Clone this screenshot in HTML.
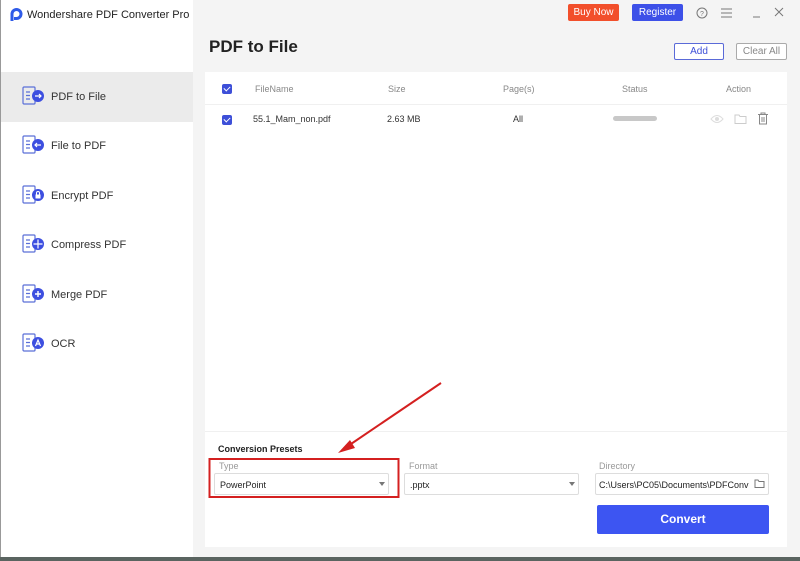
<!DOCTYPE html>
<html><head><meta charset="utf-8"><style>
*{margin:0;padding:0;box-sizing:border-box}
body{width:800px;height:561px;overflow:hidden;background:#f4f4f4;font-family:"Liberation Sans",sans-serif;position:relative;color:#333}
.abs{position:absolute}
.side{left:0;top:0;width:193px;height:558px;background:#fff;border-left:1px solid #999}
.item{position:absolute;left:0;width:192px;height:50px;font-size:11px;color:#333}
.item span{position:absolute;left:50px;top:19px}
.item svg{position:absolute;left:21px;top:14px}
.btn{position:absolute;font-size:10px;text-align:center;border-radius:2px;white-space:nowrap}
.th{position:absolute;top:84px;font-size:9px;color:#888}
.td{position:absolute;top:114px;font-size:9px;color:#333}
.cb{position:absolute;width:10px;height:10px;background:#3d4fd8;border-radius:2px}
.cb:after{content:"";position:absolute;left:3px;top:1px;width:3px;height:5px;border:solid #fff;border-width:0 1.5px 1.5px 0;transform:rotate(45deg)}
.sel{position:absolute;height:22px;border:1px solid #ddd;border-radius:2px;background:#fff;font-size:9px;padding:6px 5px;color:#222;white-space:nowrap;overflow:hidden}
.lbl{position:absolute;font-size:9px;color:#999}
</style></head><body>
<div class="abs side">
  <svg class="abs" style="left:9px;top:8px" width="13" height="14" viewBox="0 0 13 14"><path d="M2 13V6a4.5 4.5 0 1 1 4.5 4.5H4" fill="none" stroke="#2f5be8" stroke-width="3"/></svg>
  <div class="abs" style="left:26px;top:9px;font-size:11px;color:#222;white-space:nowrap">Wondershare PDF Converter Pro</div>
  <div class="item" style="top:72px;background:#ebebeb"><svg width="24" height="20" viewBox="0 0 24 20"><rect x="1" y="1" width="12" height="17" rx="1" fill="none" stroke="#5a6fd8" stroke-width="1.2"/><path d="M4 6h4M4 9.5h4M4 13h4" stroke="#5a6fd8" stroke-width="1.2"/><circle cx="16" cy="10" r="6" fill="#3d4fe0"/><path d="M13 10h6M17 8l2 2-2 2" stroke="#fff" stroke-width="1.2" fill="none"/></svg><span>PDF to File</span></div>
  <div class="item" style="top:121px"><svg width="24" height="20" viewBox="0 0 24 20"><rect x="1" y="1" width="12" height="17" rx="1" fill="none" stroke="#5a6fd8" stroke-width="1.2"/><path d="M4 6h4M4 9.5h4M4 13h4" stroke="#5a6fd8" stroke-width="1.2"/><circle cx="16" cy="10" r="6" fill="#3d4fe0"/><path d="M13 10h6M15 8l-2 2 2 2" stroke="#fff" stroke-width="1.2" fill="none"/></svg><span>File to PDF</span></div>
  <div class="item" style="top:171px"><svg width="24" height="20" viewBox="0 0 24 20"><rect x="1" y="1" width="12" height="17" rx="1" fill="none" stroke="#5a6fd8" stroke-width="1.2"/><path d="M4 6h4M4 9.5h4M4 13h4" stroke="#5a6fd8" stroke-width="1.2"/><circle cx="16" cy="10" r="6" fill="#3d4fe0"/><rect x="13.5" y="9.5" width="5" height="4" fill="#fff"/><path d="M14.5 9.5v-1.5a1.5 1.5 0 0 1 3 0v1.5" stroke="#fff" fill="none"/></svg><span>Encrypt PDF</span></div>
  <div class="item" style="top:220px"><svg width="24" height="20" viewBox="0 0 24 20"><rect x="1" y="1" width="12" height="17" rx="1" fill="none" stroke="#5a6fd8" stroke-width="1.2"/><path d="M4 6h4M4 9.5h4M4 13h4" stroke="#5a6fd8" stroke-width="1.2"/><circle cx="16" cy="10" r="6" fill="#3d4fe0"/><path d="M16 5.5v9M11.5 10h9" stroke="#fff" stroke-width="1.2"/></svg><span>Compress PDF</span></div>
  <div class="item" style="top:270px"><svg width="24" height="20" viewBox="0 0 24 20"><rect x="1" y="1" width="12" height="17" rx="1" fill="none" stroke="#5a6fd8" stroke-width="1.2"/><path d="M4 6h4M4 9.5h4M4 13h4" stroke="#5a6fd8" stroke-width="1.2"/><circle cx="16" cy="10" r="6" fill="#3d4fe0"/><path d="M16 7v6M13 10h6" stroke="#fff" stroke-width="1.4"/></svg><span>Merge PDF</span></div>
  <div class="item" style="top:319px"><svg width="24" height="20" viewBox="0 0 24 20"><rect x="1" y="1" width="12" height="17" rx="1" fill="none" stroke="#5a6fd8" stroke-width="1.2"/><path d="M4 6h4M4 9.5h4M4 13h4" stroke="#5a6fd8" stroke-width="1.2"/><circle cx="16" cy="10" r="6" fill="#3d4fe0"/><path d="M13.5 13l2.5-6 2.5 6M14.5 11h3" stroke="#fff" stroke-width="1.2" fill="none"/></svg><span>OCR</span></div>
</div>
<div class="btn" style="left:568px;top:4px;width:51px;height:17px;background:#f24f2b;color:#fff;line-height:17px">Buy Now</div>
<div class="btn" style="left:632px;top:4px;width:51px;height:17px;background:#3d50e8;color:#fff;line-height:17px">Register</div>
<svg class="abs" style="left:696px;top:7px" width="12" height="12"><circle cx="6" cy="6" r="5" fill="none" stroke="#777"/><text x="6" y="9" font-size="7" text-anchor="middle" fill="#777" font-family="Liberation Sans">?</text></svg>
<svg class="abs" style="left:721px;top:8px" width="11" height="10"><path d="M0 1h11M0 5h11M0 9h11" stroke="#777"/></svg>
<svg class="abs" style="left:752px;top:8px" width="10" height="10"><path d="M1 9h7" stroke="#777"/></svg>
<svg class="abs" style="left:774px;top:7px" width="10" height="10"><path d="M1 1l8 8M9 1l-8 8" stroke="#777"/></svg>
<div class="abs" style="left:209px;top:37px;font-size:17px;font-weight:bold;color:#222">PDF to File</div>
<div class="btn" style="left:674px;top:43px;width:50px;height:17px;border:1px solid #5a6ad8;color:#3d4fd8;line-height:15px;background:#fff">Add</div>
<div class="btn" style="left:736px;top:43px;width:51px;height:17px;border:1px solid #aaa;color:#888;line-height:15px;background:#fff">Clear All</div>
<div class="abs" style="left:205px;top:72px;width:582px;height:475px;background:#fff"></div>
<div class="abs" style="left:205px;top:104px;width:582px;height:1px;background:#f0f0f0"></div>
<div class="abs" style="left:205px;top:431px;width:582px;height:1px;background:#f0f0f0"></div>
<div class="cb" style="left:222px;top:84px"></div>
<div class="th" style="left:255px">FileName</div><div class="th" style="left:388px">Size</div><div class="th" style="left:503px">Page(s)</div><div class="th" style="left:622px">Status</div><div class="th" style="left:726px">Action</div>
<div class="cb" style="left:222px;top:115px"></div>
<div class="td" style="left:253px">55.1_Mam_non.pdf</div><div class="td" style="left:387px">2.63 MB</div><div class="td" style="left:513px">All</div>
<div class="abs" style="left:613px;top:116px;width:44px;height:5px;border-radius:3px;background:#c8c8c8"></div>
<svg class="abs" style="left:710px;top:114px" width="14" height="10"><path d="M1 5Q7-2 13 5Q7 12 1 5Z" fill="none" stroke="#ddd"/><circle cx="7" cy="5" r="2" fill="#ddd"/></svg>
<svg class="abs" style="left:734px;top:113px" width="13" height="11"><path d="M1 2h4l1 1.5h6v7H1Z" fill="none" stroke="#ccc"/></svg>
<svg class="abs" style="left:757px;top:112px" width="12" height="13"><path d="M1 2.5h10M4 2.5V1h4v1.5M2.5 3v9h7V3M5 5v5M7 5v5" fill="none" stroke="#888"/></svg>
<div class="abs" style="left:218px;top:444px;font-size:9px;font-weight:bold;color:#222">Conversion Presets</div>
<div class="lbl" style="left:219px;top:461px">Type</div>
<div class="lbl" style="left:409px;top:461px">Format</div>
<div class="lbl" style="left:599px;top:461px">Directory</div>
<div class="sel" style="left:214px;top:473px;width:175px">PowerPoint</div>
<div class="sel" style="left:404px;top:473px;width:175px">.pptx</div>
<div class="sel" style="left:595px;top:473px;width:174px;padding-left:3px">C:\Users\PC05\Documents\PDFConv</div>
<svg class="abs" style="left:379px;top:482px" width="6" height="4"><path d="M0 0h6L3 4Z" fill="#777"/></svg>
<svg class="abs" style="left:569px;top:482px" width="6" height="4"><path d="M0 0h6L3 4Z" fill="#777"/></svg>
<svg class="abs" style="left:754px;top:479px" width="11" height="9"><path d="M1 1h3l1 1.5h5v6H1Z" fill="none" stroke="#777"/></svg>
<div class="btn" style="left:597px;top:505px;width:172px;height:29px;background:#3d55f2;color:#fff;font-size:12px;font-weight:bold;line-height:29px">Convert</div>
<svg class="abs" style="left:0;top:0" width="800" height="561">
<rect x="209.5" y="459" width="189" height="38" fill="none" stroke="#d42020" stroke-width="2"/>
<path d="M441 383L348 446" stroke="#d42020" stroke-width="2"/>
<path d="M338 453L350 440L355 448Z" fill="#d42020"/>
</svg>
<div class="abs" style="left:0;top:557px;width:800px;height:4px;background:#5a6460"></div>
</body></html>
